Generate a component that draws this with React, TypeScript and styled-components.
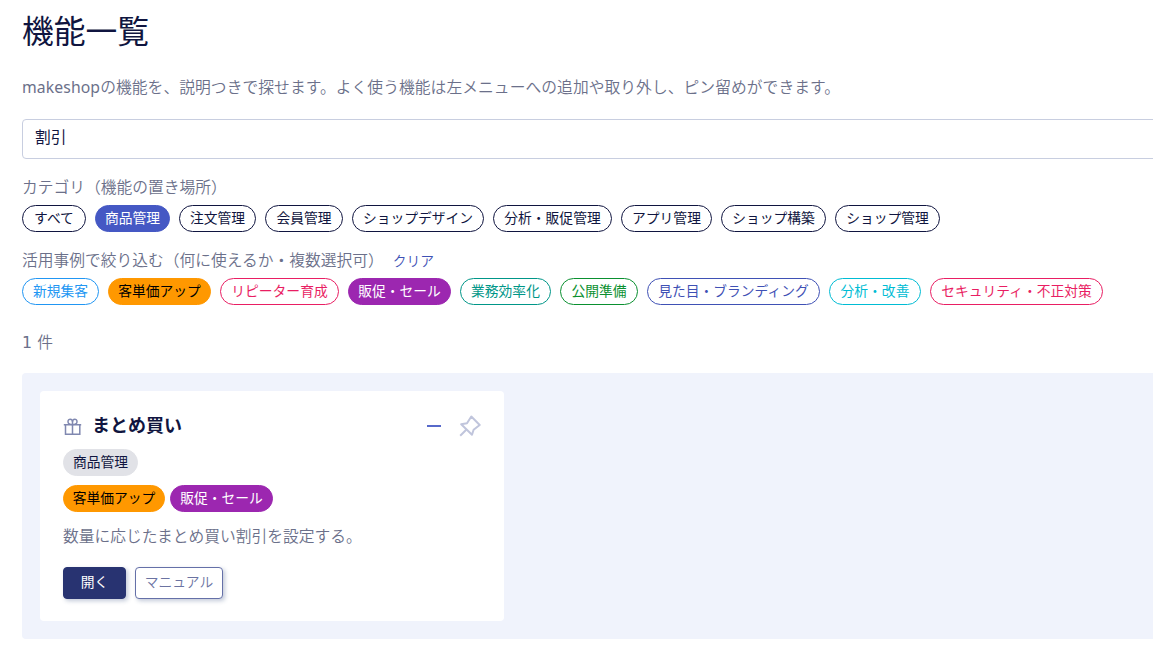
import React from "react";
import styled, { createGlobalStyle } from "styled-components";

const GlobalStyle = createGlobalStyle`
  *, *::before, *::after { box-sizing: border-box; }
  html, body { margin: 0; overflow: hidden; background: #fff; }
  body {
    font-family: "Noto Sans", "Noto Sans CJK JP", sans-serif;
    font-size: 15.75px;
    font-weight: 400;
    color: #101540;
  }
`;

const Page = styled.main`
  width: 1200px;
  height: 656px;
  padding-left: 22px;
  display: flex;
  flex-direction: column;
`;

const Title = styled.h1`
  margin: 0;
  height: 62px;
  font-size: 31.75px;
  font-weight: 400;
  line-height: 61px;
`;

const Lead = styled.p`
  margin: 13px 0 20px;
  line-height: 24px;
  font-weight: 350;
  letter-spacing: 0.06px;
  color: #6b708a;
  white-space: nowrap;
`;

const Latin = styled.span`
  font-weight: 400;
  letter-spacing: 0.1px;
`;

const SearchBox = styled.input`
  height: 40px;
  padding: 0 12px 6px;
  border: 1px solid #c8cee0;
  border-radius: 4px;
  outline: none;
  background: #fff;
  color: #101540;
  font: inherit;
`;

const Filter = styled.section<{ $top: number }>`
  margin-top: ${(p) => p.$top}px;
`;

const FilterLabel = styled.div`
  display: flex;
  gap: 9px;
  height: 30px;
  line-height: 24px;
  font-weight: 350;
  color: #6b708a;
`;

const ClearLink = styled.a`
  font-size: 13.78px;
  color: #3f51b5;
  line-height: 25px;
`;

const ChipRow = styled.div<{ $gap?: number; $top?: number }>`
  display: flex;
  gap: ${(p) => p.$gap ?? 9}px;
  margin-top: ${(p) => p.$top ?? 0}px;
`;

const Chip = styled.span<{ $w: number; $color: string; $fill?: string }>`
  flex: none;
  display: inline-flex;
  justify-content: center;
  width: ${(p) => p.$w}px;
  height: 27px;
  border: 1px solid ${(p) => p.$fill ?? p.$color};
  border-radius: 14px;
  background: ${(p) => p.$fill ?? "#fff"};
  color: ${(p) => p.$color};
  font-size: 13.78px;
  line-height: 24px;
  white-space: nowrap;
`;

const Count = styled.div`
  margin: 25px 0 18px;
  line-height: 24px;
  font-weight: 350;
  word-spacing: 1px;
  color: #6b708a;
`;

const Digit = styled.span`
  font-family: "DejaVu Sans", sans-serif;
  font-weight: 400;
`;

const Panel = styled.section`
  height: 266px;
  padding: 18px;
  border-radius: 4px;
  background: #f0f3fc;
`;

const Card = styled.article`
  width: 464px;
  height: 230px;
  padding: 22px 23px;
  border-radius: 4px;
  background: #fff;
`;

const CardHead = styled.header`
  display: flex;
  align-items: center;
  height: 27px;
`;

const CardTitle = styled.h2`
  flex: 1;
  margin: 0 0 3px 10px;
  font-size: 18px;
  font-weight: 700;
  line-height: 27px;
`;

const GiftSvg = styled.svg`
  margin-top: 1px;
  flex: none;
`;

const MinusSvg = styled.svg`
  margin: 0 18px 2px 0;
`;

const PinSvg = styled.svg`
  margin-bottom: 1px;
`;

const CardText = styled.p`
  margin: 12px 0 19px;
  line-height: 24px;
  font-weight: 350;
  color: #6b708a;
`;

const Actions = styled.div`
  display: flex;
  gap: 9px;
`;

const Button = styled.button<{ $primary?: boolean }>`
  width: ${(p) => (p.$primary ? 63 : 88)}px;
  height: 32px;
  padding: 0 0 4px;
  border: 1px solid ${(p) => (p.$primary ? "#283371" : "#6570a8")};
  border-radius: 4px;
  background: ${(p) => (p.$primary ? "#283371" : "#fff")};
  box-shadow: 2px 2px 4px rgba(40, 65, 120, 0.28);
  color: ${(p) => (p.$primary ? "#fff" : "#6b73a2")};
  font: inherit;
  font-size: 13.78px;
  font-weight: ${(p) => (p.$primary ? 400 : 350)};
  white-space: nowrap;
`;

type ChipData = { label: string; w: number; color?: string; fill?: string };

const categories: ChipData[] = [
  { label: "すべて", w: 64 },
  { label: "商品管理", w: 75, color: "#fff", fill: "#4558c4" },
  { label: "注文管理", w: 77 },
  { label: "会員管理", w: 78 },
  { label: "ショップデザイン", w: 132 },
  { label: "分析・販促管理", w: 119 },
  { label: "アプリ管理", w: 91 },
  { label: "ショップ構築", w: 105 },
  { label: "ショップ管理", w: 105 },
];

const useCases: ChipData[] = [
  { label: "新規集客", w: 77, color: "#2196f3" },
  { label: "客単価アップ", w: 103, color: "#000", fill: "#ff9800" },
  { label: "リピーター育成", w: 119, color: "#e91e63" },
  { label: "販促・セール", w: 103, color: "#fff", fill: "#9c27b0" },
  { label: "業務効率化", w: 91, color: "#009688" },
  { label: "公開準備", w: 78, color: "#0a9030" },
  { label: "見た目・ブランディング", w: 173, color: "#3f51b5" },
  { label: "分析・改善", w: 92, color: "#00bcd4" },
  { label: "セキュリティ・不正対策", w: 173, color: "#e91e63" },
];

const Chips = ({ items }: { items: ChipData[] }) => (
  <ChipRow>
    {items.map((c) => (
      <Chip key={c.label} $w={c.w} $color={c.color ?? "#101540"} $fill={c.fill}>
        {c.label}
      </Chip>
    ))}
  </ChipRow>
);

const GiftIcon = () => (
  <GiftSvg width="19" height="18" viewBox="0 0 19 18" fill="none" stroke="#8088b0" strokeWidth="1.5">
    <path d="M.8 6.700h17.400M2.500 6.700v9.500h14.300V6.700M9.500 3.500v12.700" />
    <path d="M9.500 6.500C6.500 6.500 5 5.400 5 3.700C5 .3 9.500 .3 9.500 4C9.500 .3 14 .3 14 3.700C14 5.400 12.500 6.500 9.500 6.500Z" />
  </GiftSvg>
);

const MinusIcon = () => (
  <MinusSvg width="14" height="4" viewBox="0 0 14 4">
    <path d="M0 2h14" stroke="#4558c4" strokeWidth="1.8" />
  </MinusSvg>
);

const PinIcon = () => (
  <PinSvg width="22" height="22" viewBox="0 0 22 22" fill="none" stroke="#c0c5dc" strokeWidth="2" strokeLinejoin="round">
    <path d="M12.300 1.500L20.700 10L14.600 14.700L13 19.800L2.200 9.300L8 8.200Z" />
    <path d="M7.500 14.500L1.200 20.800" />
  </PinSvg>
);

export default function App() {
  return (
    <>
      <GlobalStyle />
      <Page>
        <Title>機能一覧</Title>
        <Lead>
          <Latin>makeshop</Latin>の機能を、説明つきで探せます。よく使う機能は左メニューへの追加や取り外し、ピン留めができます。
        </Lead>
        <SearchBox defaultValue="割引" />
        <Filter $top={16}>
          <FilterLabel>カテゴリ（機能の置き場所）</FilterLabel>
          <Chips items={categories} />
        </Filter>
        <Filter $top={16}>
          <FilterLabel>
            活用事例で絞り込む（何に使えるか・複数選択可）
            <ClearLink>クリア</ClearLink>
          </FilterLabel>
          <Chips items={useCases} />
        </Filter>
        <Count>
          <Digit>1</Digit> 件
        </Count>
        <Panel>
          <Card>
            <CardHead>
              <GiftIcon />
              <CardTitle>まとめ買い</CardTitle>
              <MinusIcon />
              <PinIcon />
            </CardHead>
            <ChipRow $top={9}>
              <Chip $w={75} $color="#101540" $fill="#e1e2e7">商品管理</Chip>
            </ChipRow>
            <ChipRow $top={9} $gap={5}>
              <Chip $w={102} $color="#000" $fill="#ff9800">客単価アップ</Chip>
              <Chip $w={103} $color="#fff" $fill="#9c27b0">販促・セール</Chip>
            </ChipRow>
            <CardText>数量に応じたまとめ買い割引を設定する。</CardText>
            <Actions>
              <Button $primary>開く</Button>
              <Button>マニュアル</Button>
            </Actions>
          </Card>
        </Panel>
      </Page>
    </>
  );
}
